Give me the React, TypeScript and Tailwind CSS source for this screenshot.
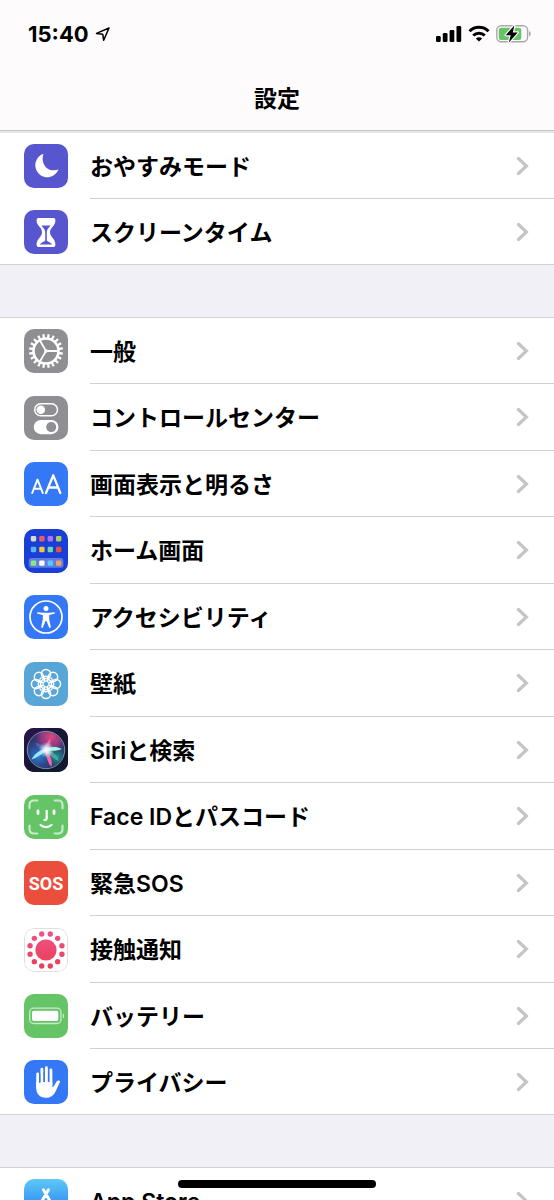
import type { ReactNode } from "react";

const TEETH = Array.from({ length: 20 }, (_, i) => i * 18);
const DOTS = Array.from({ length: 12 }, (_, i) => ((i * 30 + 15) * Math.PI) / 180);
const PETALS = Array.from({ length: 8 }, (_, i) => (i * 45 * Math.PI) / 180);
const APPS = [
  ["#d8d8d2", "#ee5a6c", "#b070f5", "#b4cf4f"],
  ["#59b5f7", "#f7c13e", "#6fd3ae", "#e94f3f"],
  ["#86ea80", "#ffffff", "#5fc9f6", "#f0a15c"],
];

function Tile({ className, children }: { className: string; children: ReactNode }) {
  return (
    <svg viewBox="0 0 44 44" aria-hidden="true" className={`size-11 shrink-0 overflow-hidden rounded-[10px] ${className}`}>
      {children}
    </svg>
  );
}

const moon = (
  <Tile className="bg-[#5856ce]">
    <path d="M19.500 9.800a12 12 0 1 0 15 15.600c-4.400 1.500-9.200 1-12.400-2-3.400-3.400-4.300-9-2.600-13.600Z" fill="#fff" />
  </Tile>
);

const hourglass = (
  <Tile className="bg-[#5856ce]">
    <path d="M14.500 8h15c1.500 0 1.900 1 1.900 2.500 0 5.500-5.400 7-5.400 11.700s5.400 6.300 5.400 12.300c0 1.500-.4 2.500-1.900 2.500h-15c-1.500 0-1.900-1-1.900-2.500 0-6 5.400-7.500 5.400-12.300s-5.400-6.200-5.400-11.700C12.600 9 13 8 14.500 8Z" fill="#fff" />
    <path d="M17.500 15.500h9c-.8 1.600-3.700 3.200-3.700 6.700v8.200c1.200 1.400 4.200 1.600 5.400 4.200H15.800c1.200-2.600 4.200-2.800 5.400-4.200v-8.200c0-3.500-2.900-5.100-3.700-6.700Z" fill="#5856ce" />
  </Tile>
);

const gear = (
  <Tile className="bg-[#8e8e93]">
    <g stroke="#fff" fill="none">
      <circle cx="22" cy="22" r="12.500" strokeWidth="2.600" />
      {TEETH.map((a) => (
        <path key={a} d="M22 9.200V5" strokeWidth="2.300" transform={`rotate(${a + 9} 22 22)`} />
      ))}
      <path d="M22 22h12M22 22l-6-10.400M22 22l-6 10.400" strokeWidth="1.800" />
    </g>
    <circle cx="22" cy="22" r="1.800" fill="#fff" />
  </Tile>
);

const toggles = (
  <Tile className="bg-[#8e8e93]">
    <rect x="10.700" y="7.700" width="22.800" height="12" rx="6" fill="none" stroke="#fff" strokeWidth="1.500" />
    <circle cx="16.800" cy="13.700" r="4.300" fill="#fff" />
    <rect x="9.700" y="24" width="24.800" height="14.200" rx="7.100" fill="#fff" />
    <circle cx="27.200" cy="31.100" r="5" fill="#8e8e93" />
  </Tile>
);

const display = (
  <Tile className="bg-[#3478f6]">
    <g fill="none" stroke="#fff" strokeLinecap="round" strokeLinejoin="round">
      <path d="m8.200 31 5.300-13.400L18.800 31M10 26.700h7" strokeWidth="2" />
      <path d="m22 31 7.300-17.700L36.300 31M24.500 25.500h9.400" strokeWidth="2.300" />
    </g>
  </Tile>
);

const home = (
  <Tile className="bg-[#1a3fd6]">
    <rect x="4.800" y="29" width="34.600" height="9.800" rx="2.500" fill="#607be2" />
    {APPS.map((row, r) =>
      row.map((color, c) => (
        <rect key={`${r}-${c}`} x={6.800 + c * 8.400} y={[7, 17.800, 31.400][r]} width="5.400" height="5.400" rx="1.300" fill={color} />
      )),
    )}
  </Tile>
);

const accessibility = (
  <Tile className="bg-[#3478f6]">
    <circle cx="22" cy="22" r="16" fill="none" stroke="#fff" strokeWidth="1.700" />
    <circle cx="22" cy="13.500" r="2.500" fill="#fff" />
    <path d="M14 17.200c4.500.8 11.500.8 16 0 1-.2 1.300 1.300.2 1.600l-5 1.100v4.300l1.600 7.600c.3 1.200-1.300 1.700-1.800.5L22.500 26h-1l-2.500 6.300c-.5 1.200-2.100.7-1.800-.5l1.600-7.600v-4.300l-5-1.100c-1.100-.3-.8-1.800.2-1.600Z" fill="#fff" />
  </Tile>
);

const wallpaper = (
  <Tile className="bg-[#58a6d6]">
    <g fill="none" stroke="#fff" strokeWidth="1.500">
      {PETALS.map((a) => (
        <circle key={a} cx={22 + Math.cos(a) * 10} cy={22 + Math.sin(a) * 10} r="4.600" />
      ))}
      {PETALS.map((a) => (
        <circle key={a} cx={22 + Math.cos(a) * 5.300} cy={22 + Math.sin(a) * 5.300} r="2.500" strokeWidth="1.200" />
      ))}
    </g>
  </Tile>
);

const siri = (
  <Tile className="bg-[#17152f]">
    <defs>
      <linearGradient id="siri-back" x1="0" y1="0" x2="1" y2="1">
        <stop offset="0" stopColor="#2b1450" />
        <stop offset=".6" stopColor="#121830" />
        <stop offset="1" stopColor="#101a2c" />
      </linearGradient>
      <radialGradient id="siri-pink" cx="27" cy="9" r="17" gradientUnits="userSpaceOnUse">
        <stop offset="0" stopColor="#e0487f" />
        <stop offset=".6" stopColor="#a83a86" stopOpacity=".75" />
        <stop offset="1" stopColor="#6c2c80" stopOpacity="0" />
      </radialGradient>
      <radialGradient id="siri-blue" cx="14" cy="28" r="18" gradientUnits="userSpaceOnUse">
        <stop offset="0" stopColor="#2b86dc" />
        <stop offset="1" stopColor="#2b4a9c" stopOpacity="0" />
      </radialGradient>
      <radialGradient id="siri-teal" cx="33" cy="29" r="13" gradientUnits="userSpaceOnUse">
        <stop offset="0" stopColor="#239b93" />
        <stop offset="1" stopColor="#175d6c" stopOpacity="0" />
      </radialGradient>
      <radialGradient id="siri-core" cx="22.500" cy="22" r="8" gradientUnits="userSpaceOnUse">
        <stop offset="0" stopColor="#fff" />
        <stop offset=".4" stopColor="#e4fbff" stopOpacity=".8" />
        <stop offset="1" stopColor="#9eeaff" stopOpacity="0" />
      </radialGradient>
    </defs>
    <rect width="44" height="44" fill="url(#siri-back)" />
    <circle cx="22" cy="22" r="18.500" fill="#30346c" />
    <circle cx="22" cy="22" r="18.500" fill="url(#siri-blue)" />
    <circle cx="22" cy="22" r="18.500" fill="url(#siri-teal)" />
    <circle cx="22" cy="22" r="18.500" fill="url(#siri-pink)" />
    <path d="M7.500 31.500C12 24 18 20.500 25 20.500c-5 3.500-10 8.500-17.500 11Z" fill="#9beafa" />
    <path d="M22.500 21c2.500 4 6.500 11 5 17.500C23.500 36 22.500 27 20.500 22Z" fill="#ff63a5" />
    <path d="M21 21c5-2.500 12-3 17 0-5 1.800-11 3-17 0Z" fill="#9dfae0" />
    <path d="M22 22c6 1 11 4 13 11-5-2-10-5-13-11Z" fill="#50c8ad" opacity=".6" />
    <path d="M11 15c5 0 10 3.500 13 7-6 1-10-2-13-7Z" fill="#8c79df" opacity=".45" />
    <path d="M20 22c1-5 3.500-9 6.500-11 .5 4-1 8-3.500 12Z" fill="#ff9bbd" opacity=".55" />
    <circle cx="22.500" cy="22" r="8" fill="url(#siri-core)" />
    <circle cx="22" cy="22" r="18.700" fill="none" stroke="#8badb5" strokeOpacity=".8" />
  </Tile>
);

const face = (
  <Tile className="bg-[#65c466]">
    <g fill="none" stroke="#fff" strokeLinecap="round">
      <path d="M5.500 13.300V10c0-3 1.500-4.500 4.500-4.500h3.300M30.700 5.500H34c3 0 4.500 1.500 4.500 4.500v3.300M38.500 30.700V34c0 3-1.500 4.500-4.500 4.500h-3.300M13.300 38.500H10c-3 0-4.500-1.500-4.500-4.500v-3.300" strokeWidth="2.200" opacity=".65" />
      <path d="M14 15.800v2.800M30 15.800v2.800" strokeWidth="2.800" />
      <path d="M22.700 15.800v7.500c0 1.300-.7 1.700-2.300 1.700M16.500 30c3.200 2.800 7.800 2.800 11 0" strokeWidth="2.200" />
    </g>
  </Tile>
);

const sos = (
  <Tile className="bg-[#eb4e3d]">
    <text x="22" y="28.500" textAnchor="middle" fill="#fff" className="font-['Liberation_Sans_Narrow','Roboto',sans-serif] text-[18px] font-bold">
      SOS
    </text>
  </Tile>
);

const exposure = (
  <Tile className="bg-white">
    <defs>
      <linearGradient id="exposure-fill" x1="0" y1="5" x2="0" y2="39" gradientUnits="userSpaceOnUse">
        <stop stopColor="#ee5285" />
        <stop offset="1" stopColor="#ea4058" />
      </linearGradient>
    </defs>
    <rect x=".5" y=".5" width="43" height="43" rx="9.500" fill="#fff" stroke="#dedede" />
    <g fill="url(#exposure-fill)">
      <circle cx="22" cy="22" r="10.600" />
      <path
        d={DOTS.map((a) => {
          const x = 22 + Math.cos(a) * 16.500;
          const y = 22 + Math.sin(a) * 16.500;
          return `M${x - 2.700} ${y}a2.700 2.700 0 1 0 5.400 0a2.700 2.700 0 1 0 -5.400 0Z`;
        }).join("")}
      />
    </g>
  </Tile>
);

const battery = (
  <Tile className="bg-[#65c466]">
    <rect x="5.700" y="14.200" width="31.300" height="15.300" rx="4" fill="none" stroke="#fff" strokeWidth="1.300" opacity=".65" />
    <rect x="8" y="16.700" width="26.300" height="10.400" rx="2" fill="#fff" />
    <path d="M38.800 19.600c1.900.5 1.900 4.100 0 4.600Z" fill="#fff" opacity=".65" />
  </Tile>
);

const hand = (
  <Tile className="bg-[#3478f6]">
    <g stroke="#fff" fill="none" strokeLinecap="round" strokeWidth="2.900">
      <path d="M13.700 14v14M17.900 9.200V24M22.400 7.800V24M26.900 10V25" />
    </g>
    <path d="M12.250 22h16.100v5.500c2.100-1.400 3-4 4.300-6 .9-1.400 2.900-1.300 3.300-.5.300.7-.2 1.500-.6 2.300l-3.800 8.200c-2 4-5 6.300-9.700 6.300-6.100 0-9.600-4-9.600-9.800Z" fill="#fff" />
    <path d="M15.800 14v9M20.200 12v10M24.650 12v10" stroke="#3478f6" strokeWidth="1.200" />
  </Tile>
);

const store = (
  <Tile className="bg-linear-to-b from-[#5ec8f7] to-[#2368ee]">
    <g stroke="#fff" fill="none" strokeLinecap="round" strokeWidth="3">
      <path d="m24.500 10.800-10.500 18M19.500 10.800l11.500 20M9 26h14M28.500 26H35" />
    </g>
  </Tile>
);

type Item = { label: string; icon: ReactNode };

const GROUPS: Item[][] = [
  [
    { label: "おやすみモード", icon: moon },
    { label: "スクリーンタイム", icon: hourglass },
  ],
  [
    { label: "一般", icon: gear },
    { label: "コントロールセンター", icon: toggles },
    { label: "画面表示と明るさ", icon: display },
    { label: "ホーム画面", icon: home },
    { label: "アクセシビリティ", icon: accessibility },
    { label: "壁紙", icon: wallpaper },
    { label: "Siriと検索", icon: siri },
    { label: "Face IDとパスコード", icon: face },
    { label: "緊急SOS", icon: sos },
    { label: "接触通知", icon: exposure },
    { label: "バッテリー", icon: battery },
    { label: "プライバシー", icon: hand },
  ],
  [{ label: "App Store", icon: store }],
];

function Row({ label, icon }: Item) {
  return (
    <li className="group h-[66px] even:not-last:h-[67px]">
      <a href="#" className="flex h-full border-[#d1d1d4] pl-6 group-last:border-b">
        <span className="flex w-[66px] shrink-0 items-center">{icon}</span>
        <span className="flex grow items-center justify-between border-b border-[#d1d1d4] pr-6 group-last:border-b-0">
          <span className="pt-0.5 text-[23px] leading-8 font-semibold">{label}</span>
          <svg viewBox="0 0 14 22" aria-hidden="true" className="h-[22px] w-3.5" fill="none" stroke="#c5c5c7" strokeWidth="3.200" strokeLinecap="round">
            <path d="M2.400 3.500 10.400 11l-8 7.500" />
          </svg>
        </span>
      </a>
    </li>
  );
}

function StatusBar() {
  return (
    <div className="flex h-[67px] items-center justify-between pr-[22px] pl-7">
      <div className="flex items-center gap-1.5">
        <span className="text-[22px] leading-7 font-bold">15:40</span>
        <svg viewBox="0 0 16 16" aria-hidden="true" className="size-4" fill="none" stroke="#000" strokeWidth="1.500" strokeLinejoin="round">
          <path d="M14 2 1.500 7.400l6.200.8 1 6.100Z" />
        </svg>
      </div>
      <div className="flex items-center gap-1.5">
        <svg viewBox="0 0 26 18" aria-hidden="true" className="h-[18px] w-[26px]">
          <rect x="0" y="11" width="4.700" height="6" rx="1.200" />
          <rect x="6.800" y="8" width="4.700" height="9" rx="1.200" />
          <rect x="13.600" y="5" width="4.700" height="12" rx="1.200" />
          <rect x="20.500" y="1" width="4.700" height="16" rx="1.200" />
        </svg>
        <svg viewBox="0 0 22 18" aria-hidden="true" className="h-[18px] w-[22px]" fill="none" stroke="#000" strokeWidth="3">
          <path d="M1.500 6.200c5.300-5.200 13.700-5.200 19 0" />
          <path d="M5.200 10.500c3.200-3.100 8.400-3.100 11.600 0" />
          <path d="M11 16.600 7.800 13.500c1.800-1.700 4.600-1.700 6.400 0Z" fill="#000" stroke="none" />
        </svg>
        <svg viewBox="0 0 36 20" aria-hidden="true" className="h-5 w-9">
          <rect x=".8" y="1.800" width="30.800" height="16" rx="4.500" fill="none" stroke="#a9a8aa" strokeWidth="1.400" />
          <path d="M33 7.300c2.400.6 2.400 4.400 0 5Z" fill="#a9a8aa" />
          <rect x="2.800" y="3.700" width="22.500" height="12.200" rx="2.500" fill="#65c466" />
          <path d="M18.300 1.500 9.700 11.200h5l-1.900 7.300 9-10h-5Z" fill="#000" stroke="#fdfbfc" strokeWidth="2.400" paintOrder="stroke" strokeLinejoin="round" />
        </svg>
      </div>
    </div>
  );
}

export default function App() {
  return (
    <div className="relative flex h-screen flex-col overflow-hidden bg-[#f0f0f6] font-['Inter','Noto_Sans_CJK_JP',sans-serif] text-black">
      <header className="shrink-0 border-b border-[#c5c4c6] bg-[#fdfbfc]">
        <StatusBar />
        <h1 className="pt-4 pb-[15px] text-center text-[23px] leading-8 font-bold">設定</h1>
      </header>
      <main className="flex flex-col gap-[52px]">
        {GROUPS.map((items) => (
          <ul key={items[0].label} className="border-t border-[#d1d1d4] bg-white first:border-t-2 first:border-[#e5e5e7]">
            {items.map((item) => (
              <Row key={item.label} {...item} />
            ))}
          </ul>
        ))}
      </main>
      <div className="absolute inset-x-0 bottom-3 flex justify-center">
        <div className="h-2 w-[198px] rounded-full bg-black" />
      </div>
    </div>
  );
}
